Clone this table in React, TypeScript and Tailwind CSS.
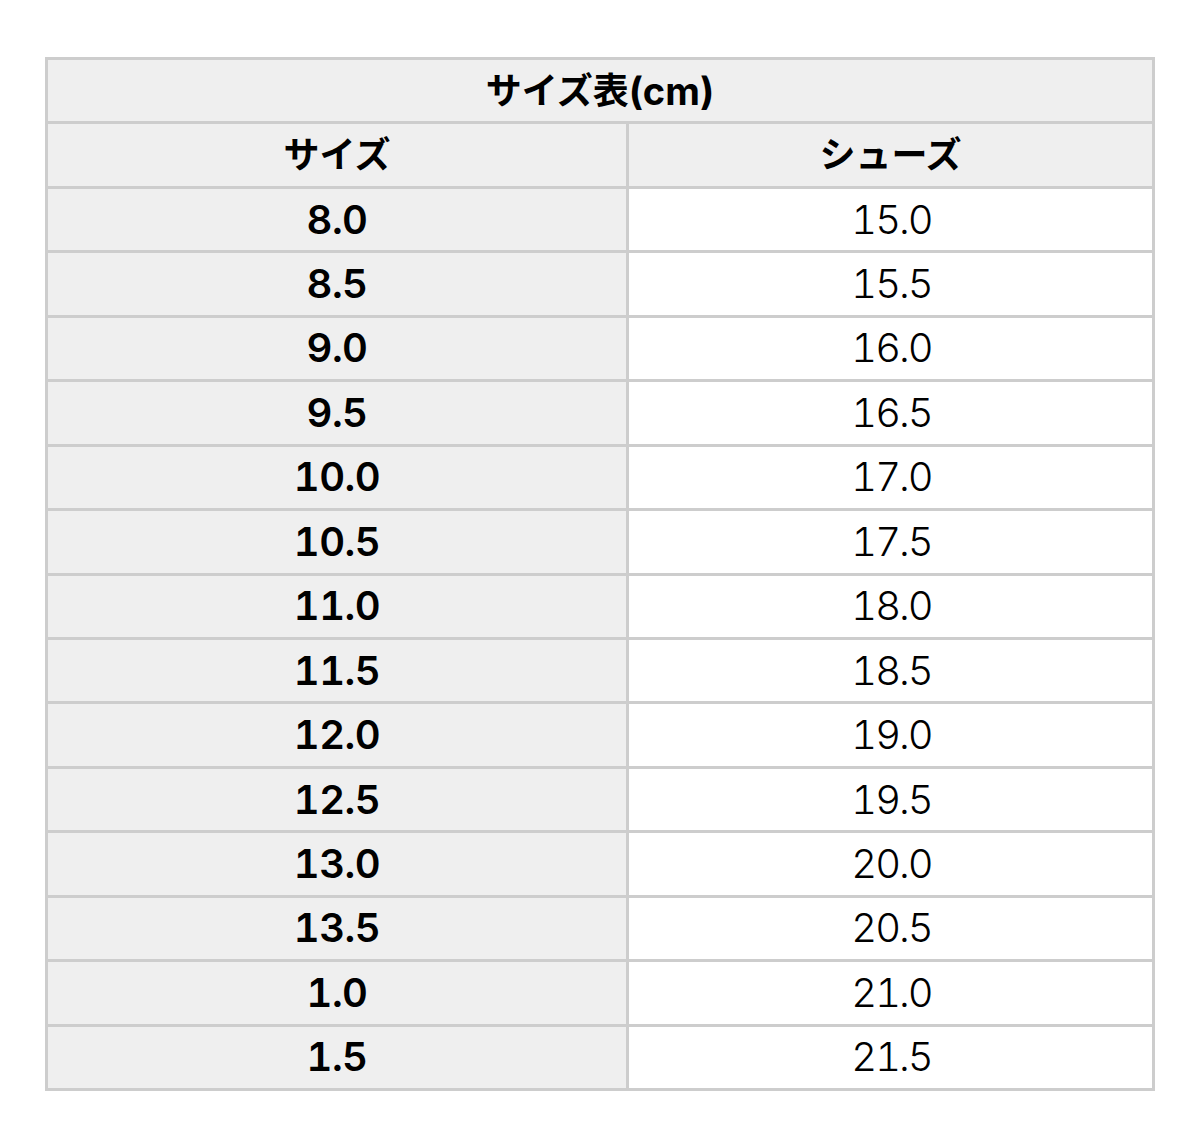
import React from "react";

const rows: [string, string][] = [
  ["8.0", "15.0"],
  ["8.5", "15.5"],
  ["9.0", "16.0"],
  ["9.5", "16.5"],
  ["10.0", "17.0"],
  ["10.5", "17.5"],
  ["11.0", "18.0"],
  ["11.5", "18.5"],
  ["12.0", "19.0"],
  ["12.5", "19.5"],
  ["13.0", "20.0"],
  ["13.5", "20.5"],
  ["1.0", "21.0"],
  ["1.5", "21.5"],
];

const font = { fontFamily: 'Inter, "Noto Sans CJK JP", "Noto Sans", sans-serif' };

export default function App() {
  return (
    <div className="w-[1200px] h-[1133px] bg-white pt-[57px] pl-[45px]" style={font}>
      <div className="w-[1110px] h-[1034px] border-[3px] border-[#cdcdcd] flex flex-col text-black">
        <div className="flex-1 bg-[#efefef] flex items-center justify-center text-[36px] font-bold leading-none">
          <span>サイズ表</span>
          <span className="text-[38px]">(cm)</span>
        </div>
        <div className="flex-1 flex border-t-[3px] border-[#cdcdcd] text-[36px] font-bold leading-none">
          <div className="w-[581px] bg-[#efefef] flex items-center justify-center border-r-[3px] border-[#cdcdcd]">
            サイズ
          </div>
          <div className="flex-1 bg-[#efefef] flex items-center justify-center">シューズ</div>
        </div>
        {rows.map(([a, b]) => (
          <div key={a} className="flex-1 flex border-t-[3px] border-[#cdcdcd] text-[40px] leading-none tabular-nums">
            <div className="w-[581px] bg-[#efefef] flex items-center justify-center border-r-[3px] border-[#cdcdcd] font-semibold tracking-[-0.5px]">
              {a}
            </div>
            <div className="flex-1 bg-white flex items-center justify-center font-light tracking-[-2px] pl-[2px]">
              {b}
            </div>
          </div>
        ))}
      </div>
    </div>
  );
}
